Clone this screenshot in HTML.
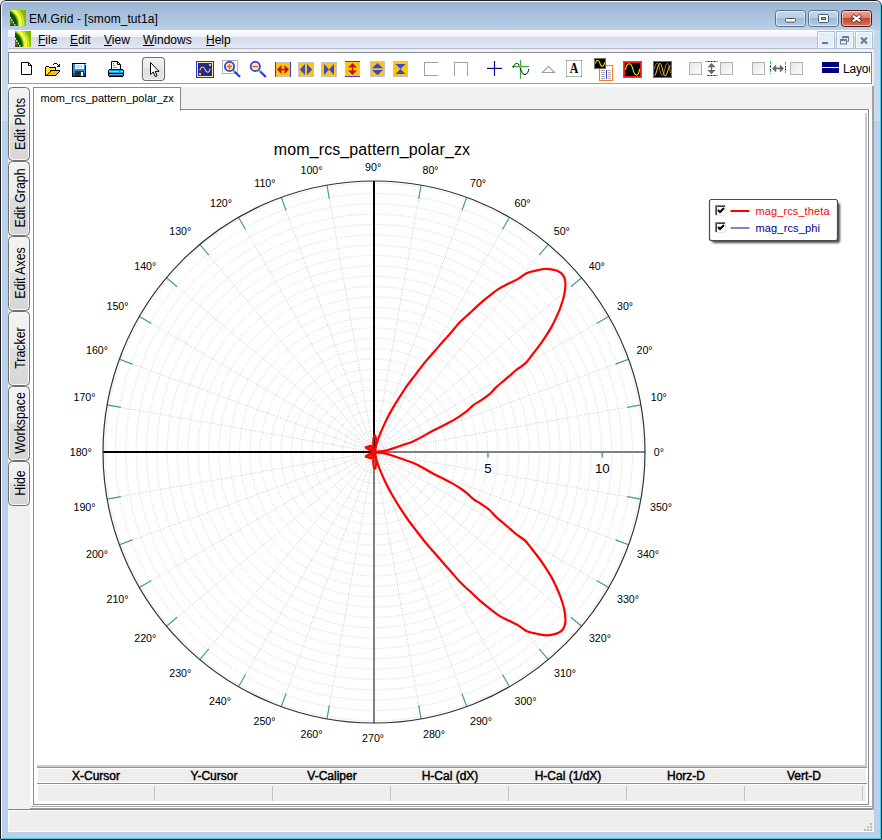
<!DOCTYPE html>
<html><head><meta charset="utf-8"><title>EM.Grid - [smom_tut1a]</title>
<style>
*{box-sizing:border-box;margin:0;padding:0}
html,body{width:882px;height:840px;overflow:hidden;background:#fff}
body{font-family:"Liberation Sans",Arial,sans-serif;font-size:12px;color:#000;position:relative}
#win{position:absolute;left:0;top:0;width:882px;height:840px;background:#b9d1ea;border-radius:6px 6px 1px 1px;overflow:hidden}
#win>*{position:absolute}
#frame{left:0;top:0;width:882px;height:840px;border:1px solid #1c1c1c;border-radius:6px 6px 1px 1px}
#inner{left:1px;top:1px;width:880px;height:838px;border:1px solid #fff;border-color:#fff #3fd4f4 #36d0ee #fff;border-radius:5px 5px 0 0}
#cap{left:2px;top:2px;width:878px;height:28px;background:linear-gradient(#99b4d1,#b9d1ea);border-radius:5px 5px 0 0}
.fl{top:30px;width:6px;height:91px;background:linear-gradient(#c3d7ee,#cbdcf1)}
#title{left:29px;top:11px;font-size:12px;line-height:16px;white-space:nowrap;letter-spacing:0.07px}
#menubar{left:8px;top:30px;width:866px;height:19px;background:linear-gradient(#ffffff 0,#eff2fa 36%,#d6dbec 37%,#e2e7f5 94%,#b6bccc 95%)}
.mi{position:absolute;top:2px;font-size:12px;line-height:16px;white-space:nowrap}
.mi u{text-decoration:underline;text-underline-offset:1px}
#client{left:8px;top:49px;width:866px;height:783px;background:#f0f0f0}
#toolbar{left:8px;top:52px;width:864px;height:32px;background:#fff;border:1px solid #828790;border-bottom-color:#9a9ea6}
#layout{left:843px;top:61px;width:27px;height:18px;overflow:hidden;font-size:12px;line-height:16px;white-space:nowrap;letter-spacing:-0.2px}
#dock{left:30px;top:84px;width:843px;height:725px;background:#fff}
#strip{left:33px;top:87px;width:839px;height:22px;background:#f0f0f0}
#tbw{left:8px;top:84px;width:22px;height:3px;background:#fff}
#rline{left:872px;top:86px;width:2px;height:724px;background:#a2a2a2}
.stab{position:absolute;left:8px;width:22px;border:1.4px solid #707070;border-radius:4.5px;background:linear-gradient(#f3f3f3 0,#ededed 49%,#dfdfdf 50%,#d6d6d6 100%);box-shadow:inset 0 0 0 1px #f8f8f8}
.stab span{position:absolute;left:calc(50% + 0.8px);top:calc(50% - 0.5px);transform:translate(-50%,-50%) rotate(-90deg) scale(1.03,1.17);white-space:nowrap;font-size:12px;letter-spacing:0px}
#tab{left:33px;top:87px;width:148px;height:24px;background:#fff;border:1px solid #898c95;border-bottom:none;font-size:11px;line-height:14px;padding:3px 0 0 6.5px;white-space:nowrap;letter-spacing:0px}
#pane{left:33px;top:109px;width:836px;height:696px;background:#fff;border:1px solid #898c95}
#panecover{left:34px;top:109px;width:146px;height:2px;background:#fff}
#rwhite{left:869px;top:87px;width:4px;height:722px;background:#fff}
#bwhite{left:31px;top:805px;width:842px;height:2px;background:#fff}
#inl{left:865px;top:113px;width:2px;height:653px;background:#cacaca}
#ctop{left:37px;top:765px;width:830px;height:3px;background:linear-gradient(#cfcfcf 0,#cbcbcb 66%,#949494 67%)}
#chead{left:38px;top:769px;width:828px;height:13px;background:#f0eded}
#cline{left:37px;top:783px;width:830px;height:1px;background:#8c8c8c}
#crow{left:38px;top:785px;width:828px;height:16px;background:#f0eded}
.ch{position:absolute;top:769px;width:118px;height:15px;text-align:center;font-size:12px;font-weight:normal;-webkit-text-stroke:0.45px #000;line-height:15px;white-space:nowrap;letter-spacing:0px}
.csep{position:absolute;top:786px;width:1px;height:15px;background:#c4c4c4}
#b1{left:31px;top:806px;width:843px;height:1px;background:#ababab}
#b2{left:30px;top:808px;width:844px;height:1px;background:#9a9a9a}
#b3{left:8px;top:809px;width:866px;height:1px;background:#868686}
#status{left:8px;top:810px;width:866px;height:22px;background:#f0eded;border:1px solid #fff;border-right:none}
svg{position:absolute;left:0;top:0}
</style></head><body>
<div id="win">
<div id="cap"></div><div class="fl" style="left:2px"></div><div class="fl" style="left:874px"></div>
<div id="title">EM.Grid - [smom_tut1a]</div>
<div id="menubar">
<span class="mi" style="left:30px"><u>F</u>ile</span>
<span class="mi" style="left:62px"><u>E</u>dit</span>
<span class="mi" style="left:96px"><u>V</u>iew</span>
<span class="mi" style="left:135px"><u>W</u>indows</span>
<span class="mi" style="left:198px"><u>H</u>elp</span>
</div>
<div id="client"></div>
<div id="toolbar"></div>
<div id="dock"></div><div id="strip"></div>
<div id="layout">Layout</div>
<div id="tbw"></div>
<div class="stab" style="top:87px;height:74px"><span>Edit Plots</span></div>
<div class="stab" style="top:161px;height:75px"><span>Edit Graph</span></div>
<div class="stab" style="top:236px;height:75px"><span>Edit Axes</span></div>
<div class="stab" style="top:311px;height:75px"><span>Tracker</span></div>
<div class="stab" style="top:386px;height:75px"><span>Workspace</span></div>
<div class="stab" style="top:461px;height:45px"><span>Hide</span></div>

<div id="pane"></div>
<div id="tab">mom_rcs_pattern_polar_zx</div>
<div id="panecover"></div>
<div id="inl"></div>
<div id="ctop"></div><div id="chead"></div><div id="cline"></div><div id="crow"></div>
<div class="ch" style="left:37px">X-Cursor</div><div class="ch" style="left:155px">Y-Cursor</div><div class="ch" style="left:273px">V-Caliper</div><div class="ch" style="left:391px">H-Cal (dX)</div><div class="ch" style="left:509px">H-Cal (1/dX)</div><div class="ch" style="left:627px">Horz-D</div><div class="ch" style="left:745px">Vert-D</div><div class="csep" style="left:154px"></div><div class="csep" style="left:272px"></div><div class="csep" style="left:390px"></div><div class="csep" style="left:508px"></div><div class="csep" style="left:626px"></div><div class="csep" style="left:744px"></div><div class="csep" style="left:862px"></div>
<div id="b1"></div><div id="b2"></div><div id="b3"></div>
<div id="status"></div>
<div id="rline"></div>
<div id="inner"></div>
<div id="frame"></div>
<svg width="882" height="840" viewBox="0 0 882 840">
<defs>
<radialGradient id="gi0" gradientUnits="userSpaceOnUse" cx="2.8" cy="24.3" r="28"><stop offset="0.321" stop-color="#5a7c00"/><stop offset="0.371" stop-color="#1c4c04"/><stop offset="0.407" stop-color="#0a4208"/><stop offset="0.493" stop-color="#0c5c10"/><stop offset="0.539" stop-color="#4ca018"/><stop offset="0.589" stop-color="#e8f828"/><stop offset="0.671" stop-color="#ffff50"/><stop offset="0.707" stop-color="#b4d010"/><stop offset="0.743" stop-color="#e0ec30"/><stop offset="0.786" stop-color="#90c000"/><stop offset="1.000" stop-color="#6aa800"/></radialGradient>
<radialGradient id="gi1" gradientUnits="userSpaceOnUse" cx="7.8" cy="45.3" r="28"><stop offset="0.321" stop-color="#5a7c00"/><stop offset="0.371" stop-color="#1c4c04"/><stop offset="0.407" stop-color="#0a4208"/><stop offset="0.493" stop-color="#0c5c10"/><stop offset="0.539" stop-color="#4ca018"/><stop offset="0.589" stop-color="#e8f828"/><stop offset="0.671" stop-color="#ffff50"/><stop offset="0.707" stop-color="#b4d010"/><stop offset="0.743" stop-color="#e0ec30"/><stop offset="0.786" stop-color="#90c000"/><stop offset="1.000" stop-color="#6aa800"/></radialGradient>
<linearGradient id="gwb" x1="0" y1="0" x2="0" y2="1"><stop offset="0" stop-color="#c8d8ea"/><stop offset="0.47" stop-color="#b8cce4"/><stop offset="0.5" stop-color="#9fb9d8"/><stop offset="1" stop-color="#b4cbe6"/></linearGradient>
<linearGradient id="gcl" x1="0" y1="0" x2="0" y2="1"><stop offset="0" stop-color="#e8a898"/><stop offset="0.47" stop-color="#d8806c"/><stop offset="0.5" stop-color="#c4482c"/><stop offset="1" stop-color="#d87858"/></linearGradient>
</defs>
<rect x="10" y="10" width="16" height="16" fill="url(#gi0)"/>
<line x1="10" y1="17" x2="15.5" y2="26" stroke="#fff" stroke-width="1.2" stroke-dasharray="1.6 1.2"/>
<rect x="10" y="24.5" width="3" height="1.5" fill="#404030"/>
<rect x="15" y="31" width="16" height="16" fill="url(#gi1)"/>
<line x1="15" y1="38" x2="20.5" y2="47" stroke="#fff" stroke-width="1.2" stroke-dasharray="1.6 1.2"/>
<rect x="15" y="45.5" width="3" height="1.5" fill="#404030"/>
<rect x="775.5" y="10.5" width="30" height="16" rx="3" fill="url(#gwb)" stroke="#5a6f8c"/>
<rect x="776.5" y="11.5" width="28" height="14" rx="2" fill="none" stroke="#fff" stroke-opacity="0.55"/>
<rect x="808.5" y="10.5" width="30" height="16" rx="3" fill="url(#gwb)" stroke="#5a6f8c"/>
<rect x="809.5" y="11.5" width="28" height="14" rx="2" fill="none" stroke="#fff" stroke-opacity="0.55"/>
<rect x="841.5" y="10.5" width="30" height="16" rx="3" fill="url(#gcl)" stroke="#4a1820"/>
<rect x="842.5" y="11.5" width="28" height="14" rx="2" fill="none" stroke="#fff" stroke-opacity="0.55"/>
<rect x="785.5" y="18.5" width="10" height="3.6" rx="1" fill="#fff" stroke="#4a5568" stroke-width="1"/>
<rect x="818.5" y="14.5" width="10" height="8" rx="1" fill="#fff" stroke="#4a5568" stroke-width="1"/>
<rect x="821.5" y="17.5" width="4" height="2" fill="#9fb9d8" stroke="#4a5568" stroke-width="1"/>
<path d="M853.6,16.3 L859.4,20.7 M859.4,16.3 L853.6,20.7" fill="none" stroke="#4a2a34" stroke-width="3.8" stroke-linecap="square" stroke-opacity="0.85"/>
<path d="M853.6,16.3 L859.4,20.7 M859.4,16.3 L853.6,20.7" fill="none" stroke="#fff" stroke-width="2.1" stroke-linecap="square"/>
<rect x="817.5" y="31.5" width="17" height="17" fill="#e2eefa" stroke="#b0c0d2"/>
<rect x="818.5" y="32.5" width="15" height="15" fill="none" stroke="#f4f9fe"/>
<rect x="836.5" y="31.5" width="17" height="17" fill="#e2eefa" stroke="#b0c0d2"/>
<rect x="837.5" y="32.5" width="15" height="15" fill="none" stroke="#f4f9fe"/>
<rect x="855.5" y="31.5" width="17" height="17" fill="#e2eefa" stroke="#b0c0d2"/>
<rect x="856.5" y="32.5" width="15" height="15" fill="none" stroke="#f4f9fe"/>
<rect x="822" y="42" width="6" height="2" fill="#6c7a8a"/>
<g fill="none" stroke="#6c7a8a" stroke-width="1"><path d="M842.5,38.5 V36.5 H848.5 V41.5 H846.5"/><path d="M842,37.5 H849" /><rect x="840.5" y="39.5" width="6" height="4.5" fill="#e2eefa"/><path d="M840,40.5 H847"/></g>
<path d="M861,37.5 L867,43.5 M867,37.5 L861,43.5" stroke="#6c7a8a" stroke-width="2"/>
<g fill="#b8b8b8" shape-rendering="crispEdges">
<rect x="870" y="823" width="2" height="2"/>
<rect x="870" y="826" width="2" height="2"/>
<rect x="870" y="829" width="2" height="2"/>
<rect x="867" y="826" width="2" height="2"/>
<rect x="867" y="829" width="2" height="2"/>
<rect x="864" y="829" width="2" height="2"/>
</g>
<g shape-rendering="crispEdges">
<path d="M21.5,62.5 H28.5 L31.5,65.5 V74.5 H21.5 Z" fill="#fff" stroke="#000" stroke-width="1" shape-rendering="geometricPrecision"/>
<path d="M28.5,62.5 V65.5 H31.5" fill="none" stroke="#000" stroke-width="1" shape-rendering="geometricPrecision"/>
<rect x="46" y="67" width="3" height="1" fill="#ffd020"/>
<rect x="46" y="68" width="9" height="2" fill="#ffd020"/>
<rect x="46" y="70" width="4" height="1" fill="#ffd020"/>
<rect x="46" y="71" width="4" height="1" fill="#ffd020"/>
<rect x="46" y="72" width="3" height="1" fill="#ffd020"/>
<rect x="46" y="73" width="2" height="1" fill="#ffd020"/>
<rect x="46" y="74" width="1" height="1" fill="#ffd020"/>
<rect x="46" y="67" width="1" height="1" fill="#fff"/>
<rect x="48" y="67" width="1" height="1" fill="#fff"/>
<rect x="47" y="68" width="1" height="1" fill="#fff"/>
<rect x="49" y="68" width="1" height="1" fill="#fff"/>
<rect x="51" y="68" width="1" height="1" fill="#fff"/>
<rect x="53" y="68" width="1" height="1" fill="#fff"/>
<rect x="46" y="69" width="1" height="1" fill="#fff"/>
<rect x="48" y="69" width="1" height="1" fill="#fff"/>
<rect x="50" y="69" width="1" height="1" fill="#fff"/>
<rect x="52" y="69" width="1" height="1" fill="#fff"/>
<rect x="54" y="69" width="1" height="1" fill="#fff"/>
<rect x="47" y="70" width="1" height="1" fill="#fff"/>
<rect x="49" y="70" width="1" height="1" fill="#fff"/>
<rect x="46" y="71" width="1" height="1" fill="#fff"/>
<rect x="48" y="71" width="1" height="1" fill="#fff"/>
<rect x="47" y="72" width="1" height="1" fill="#fff"/>
<rect x="46" y="73" width="1" height="1" fill="#fff"/>
<rect x="51" y="71" width="8" height="1" fill="#f8c000"/>
<rect x="50" y="72" width="8" height="1" fill="#f8c000"/>
<rect x="49" y="73" width="8" height="1" fill="#f8c000"/>
<rect x="48" y="74" width="8" height="1" fill="#f8c000"/>
<rect x="46" y="66" width="3" height="1" fill="#000"/>
<rect x="49" y="67" width="7" height="1" fill="#000"/>
<rect x="45" y="67" width="1" height="9" fill="#000"/>
<rect x="55" y="68" width="1" height="2" fill="#000"/>
<rect x="50" y="70" width="10" height="1" fill="#000"/>
<rect x="45" y="75" width="11" height="1" fill="#000"/>
<rect x="50" y="71" width="1" height="1" fill="#000"/>
<rect x="49" y="72" width="1" height="1" fill="#000"/>
<rect x="48" y="73" width="1" height="1" fill="#000"/>
<rect x="47" y="74" width="1" height="1" fill="#000"/>
<rect x="59" y="71" width="1" height="1" fill="#000"/>
<rect x="58" y="72" width="1" height="1" fill="#000"/>
<rect x="57" y="73" width="1" height="1" fill="#000"/>
<rect x="56" y="74" width="1" height="1" fill="#000"/>
<rect x="53" y="64" width="1" height="1" fill="#000"/>
<rect x="54" y="63" width="3" height="1" fill="#000"/>
<rect x="57" y="64" width="1" height="1" fill="#000"/>
<rect x="58" y="65" width="1" height="1" fill="#000"/>
<rect x="59" y="64" width="1" height="3" fill="#000"/>
<rect x="57" y="66" width="2" height="1" fill="#000"/>
<rect x="72" y="63" width="14" height="14" fill="#000"/>
<rect x="73" y="64" width="12" height="12" fill="#1c96e8"/>
<rect x="73" y="73" width="12" height="3" fill="#3a44c8"/>
<rect x="75" y="64" width="9" height="5" fill="#fff"/>
<rect x="76" y="65" width="6" height="3" fill="#d8d8d8"/>
<rect x="85" y="64" width="1" height="1" fill="#fff"/>
<rect x="75" y="71" width="9" height="5" fill="#2c2c2c"/>
<rect x="81" y="72" width="2" height="4" fill="#fff"/>
<path d="M111.5,69 V61.5 H117.5 L120.5,64.5 V69" fill="#fff" stroke="#000" stroke-width="1" shape-rendering="geometricPrecision"/>
<path d="M117.5,61.5 V64.5 H120.5" fill="none" stroke="#000" stroke-width="1" shape-rendering="geometricPrecision"/>
<rect x="113" y="63" width="1" height="1" fill="#777"/><rect x="113" y="65" width="2" height="1" fill="#888"/><rect x="113" y="67" width="4" height="1" fill="#999"/>
<rect x="108" y="70" width="16" height="6" fill="#000"/><rect x="109" y="69" width="14" height="8" fill="#000"/>
<rect x="109" y="70" width="14" height="3" fill="#08a8e8"/>
<rect x="109" y="71" width="14" height="1" fill="#a8e420"/>
<rect x="119" y="71" width="1" height="1" fill="#f03030"/><rect x="120" y="71" width="1" height="1" fill="#ff8a10"/><rect x="121" y="71" width="2" height="1" fill="#ffe810"/>
<rect x="109" y="74" width="14" height="1" fill="#70a0dc"/>
<rect x="109" y="75" width="14" height="1" fill="#3440c8"/>
</g>
<defs><linearGradient id="gbtn" x1="0" y1="0" x2="0" y2="1"><stop offset="0" stop-color="#f2f2f2"/><stop offset="0.5" stop-color="#e8e8e8"/><stop offset="0.5" stop-color="#dddddd"/><stop offset="1" stop-color="#e6e6e6"/></linearGradient>
<linearGradient id="gchk" x1="0" y1="0" x2="1" y2="1"><stop offset="0" stop-color="#e6e6e6"/><stop offset="1" stop-color="#fcfcfc"/></linearGradient></defs>
<rect x="142.5" y="57.5" width="22" height="23" rx="3.5" fill="url(#gbtn)" stroke="#6c6c6c" stroke-width="1.2"/>
<rect x="143.5" y="58.5" width="20" height="21" rx="2.5" fill="none" stroke="#fafafa" stroke-opacity="0.7"/>
<path d="M150.5,62.5 V74.6 L153.3,72 L155.3,76.6 L157.2,75.8 L155.2,71.4 H159 Z" fill="#fff" stroke="#000" stroke-width="1" stroke-linejoin="miter"/>
<g shape-rendering="crispEdges"><rect x="196" y="61" width="18" height="17" fill="#2434c0"/><rect x="197" y="62" width="16" height="15" fill="#fbe8b4"/><rect x="198" y="63" width="14" height="13" fill="#20289c"/>
<rect x="209" y="64" width="2" height="2" fill="#ffd020"/><rect x="199" y="73" width="2" height="2" fill="#ffd020"/></g>
<path d="M200,70.5 C200.6,66.2 203.4,65.8 205,69.5 C206.6,73.4 209.4,73.4 210,68.6" fill="none" stroke="#ffd020" stroke-width="1.1"/>
<rect x="222.5" y="60.5" width="15" height="13" fill="#fff" stroke="#b4b4b4" shape-rendering="crispEdges"/>
<line x1="233.5" y1="70.5" x2="240.0" y2="77" stroke="#2c3cc8" stroke-width="2.2"/>
<line x1="233.1" y1="70.2" x2="234.8" y2="71.9" stroke="#70d020" stroke-width="2"/>
<circle cx="229.5" cy="66.4" r="4.6" fill="#fbf0c8" stroke="#3a4cd0" stroke-width="1.9"/>
<line x1="226.8" y1="66.5" x2="232.2" y2="66.5" stroke="#ff5a10" stroke-width="1.35"/>
<line x1="229.5" y1="63.8" x2="229.5" y2="69.2" stroke="#ff5a10" stroke-width="1.35"/>
<line x1="259.3" y1="70.5" x2="265.8" y2="77" stroke="#2c3cc8" stroke-width="2.2"/>
<line x1="258.90000000000003" y1="70.2" x2="260.6" y2="71.9" stroke="#70d020" stroke-width="2"/>
<circle cx="255.3" cy="66.4" r="4.6" fill="#fbf0c8" stroke="#3a4cd0" stroke-width="1.9"/>
<line x1="252.60000000000002" y1="66.5" x2="258.0" y2="66.5" stroke="#ff5a10" stroke-width="1.35"/>
<g shape-rendering="crispEdges">
<rect x="275" y="62" width="16" height="15" fill="#c4c4c4"/><rect x="276" y="63" width="14" height="13" fill="#ffc410"/>
<rect x="298" y="62" width="16" height="15" fill="#c4c4c4"/><rect x="299" y="63" width="14" height="13" fill="#ffc410"/>
<rect x="321" y="62" width="16" height="15" fill="#c4c4c4"/><rect x="322" y="63" width="14" height="13" fill="#ffc410"/>
<rect x="275" y="62" width="1" height="15" fill="#3040d8"/><rect x="290" y="62" width="1" height="15" fill="#3040d8"/>
<rect x="345" y="61" width="15" height="16" fill="#c4c4c4"/><rect x="346" y="62" width="13" height="14" fill="#ffc410"/>
<rect x="370" y="61" width="15" height="16" fill="#c4c4c4"/><rect x="371" y="62" width="13" height="14" fill="#ffc410"/>
<rect x="393" y="61" width="15" height="16" fill="#c4c4c4"/><rect x="394" y="62" width="13" height="14" fill="#ffc410"/>
<rect x="345" y="61" width="15" height="1" fill="#3040d8"/><rect x="345" y="76" width="15" height="1" fill="#3040d8"/>
</g>
<path d="M277,69.5 L281.5,65 V68.8 H284.5 V65 L289,69.5 L284.5,74 V70.2 H281.5 V74 Z" fill="#c81414"/>
<path d="M299.8,69.5 L305,64 V75 Z M312.2,69.5 L307,64 V75 Z" fill="#3848d0"/>
<path d="M324,64 L329,69.5 L324,75 Z M334,64 L329,69.5 L334,75 Z" fill="#3848d0"/>
<path d="M352.5,63 L357,67.5 H353.2 V70.5 H357 L352.5,75 L348,70.5 H351.8 V67.5 H348 Z" fill="#c81414"/>
<path d="M377.5,63 L383,68.2 H372 Z M377.5,75.2 L383,70 H372 Z" fill="#3848d0"/>
<path d="M395.5,64 H405.5 L400.5,69 Z M395.5,74 H405.5 L400.5,69 Z" fill="#3848d0"/>
<g fill="none" stroke="#a0a0a0" stroke-width="1" shape-rendering="crispEdges"><path d="M438,62.5 H424.5 V75.5 H438"/><path d="M454.5,76 V62.5 H467.5 V76"/></g>
<g stroke="#000080" stroke-width="1.15"><line x1="494.5" y1="61" x2="494.5" y2="76"/><line x1="487" y1="68.4" x2="502" y2="68.4"/></g>
<g stroke="#28b43c" stroke-width="1.2"><line x1="520.5" y1="60" x2="520.5" y2="78.7"/><line x1="512" y1="66.5" x2="529" y2="66.5"/></g>
<path d="M513.2,67.8 C514,64 517,61.5 519,65 C521,69 522,75 525,74.6 C527.5,74.2 528.6,71 528.8,69" fill="none" stroke="#000" stroke-width="0.95"/>
<rect x="519" y="65" width="3" height="3" fill="#ff7a14" shape-rendering="crispEdges"/>
<path d="M548.5,66.4 L554.6,72.5 H542.4 Z" fill="#fff" stroke="#9c9c9c" stroke-width="1.1"/>
<rect x="566.5" y="60.5" width="15" height="16" fill="#fff" stroke="#b8b8b8" shape-rendering="crispEdges"/>
<g fill="#707070" shape-rendering="crispEdges"><rect x="566" y="60" width="1" height="1"/><rect x="581" y="60" width="1" height="1"/><rect x="566" y="76" width="1" height="1"/><rect x="581" y="76" width="1" height="1"/></g>
<text x="574" y="73" text-anchor="middle" font-family="Liberation Serif, serif" font-weight="bold" font-size="14" fill="#000" textLength="8.6" lengthAdjust="spacingAndGlyphs">A</text>
<g shape-rendering="crispEdges"><rect x="599.5" y="65.5" width="13" height="15" fill="#fff" stroke="#ff7a1e"/>
<rect x="601" y="70" width="4" height="1" fill="#b0b0b0"/><rect x="608" y="70" width="3" height="1" fill="#b0b0b0"/>
<rect x="601" y="72" width="4" height="1" fill="#b0b0b0"/><rect x="608" y="72" width="3" height="1" fill="#b0b0b0"/>
<rect x="601" y="74" width="4" height="1" fill="#b0b0b0"/><rect x="608" y="74" width="3" height="1" fill="#b0b0b0"/>
<rect x="601" y="76" width="4" height="1" fill="#b0b0b0"/><rect x="608" y="76" width="3" height="1" fill="#b0b0b0"/>
<rect x="601" y="78" width="4" height="1" fill="#b0b0b0"/><rect x="608" y="78" width="3" height="1" fill="#b0b0b0"/>
<rect x="606" y="70" width="1" height="9" fill="#3040d8"/>
<rect x="594" y="58" width="12" height="11" fill="#6e6e6e"/><rect x="595" y="59" width="10" height="9" fill="#000"/></g>
<path d="M595.5,63.5 C596.3,59.2 598.6,59.2 599.8,63 C601,67.4 603.6,67.4 604.6,62.3" fill="none" stroke="#ffd800" stroke-width="1.05"/>
<g shape-rendering="crispEdges"><rect x="623" y="61" width="19" height="17" fill="#707070"/><rect x="624" y="62" width="17" height="15" fill="#e81818"/><rect x="625" y="63" width="15" height="13" fill="#000"/></g>
<path d="M625.6,70 C626.5,62 631,61.5 633,69.5 C634.5,76.5 638.5,77.5 639.6,69" fill="none" stroke="#ffff00" stroke-width="1.05"/>
<g shape-rendering="crispEdges"><rect x="653" y="61" width="19" height="17" fill="#707070"/><rect x="654" y="62" width="17" height="15" fill="#000"/></g>
<path d="M654.5,69 C655.3,65 656,63.3 657.3,63.3 C659.5,63.3 660,75.5 662.3,75.5 C664.6,75.5 665,63.3 667.2,63.3 C669,63.3 669.8,70 670.6,73" fill="none" stroke="#909090" stroke-width="0.9"/>
<path d="M654.6,75.5 C656.5,75 657.5,63.5 660,63.5 C662.5,63.5 662.8,75.8 665.2,75.8 C667.6,75.8 668,66 670.5,65.5" fill="none" stroke="#ffc000" stroke-width="1.05"/>
<rect x="689.5" y="62.5" width="12" height="12" fill="url(#gchk)" stroke="#b2b2b2" shape-rendering="crispEdges"/>
<rect x="720.5" y="62.5" width="12" height="12" fill="url(#gchk)" stroke="#b2b2b2" shape-rendering="crispEdges"/>
<rect x="752.5" y="62.5" width="12" height="12" fill="url(#gchk)" stroke="#b2b2b2" shape-rendering="crispEdges"/>
<rect x="790.5" y="62.5" width="12" height="12" fill="url(#gchk)" stroke="#b2b2b2" shape-rendering="crispEdges"/>
<g stroke="#10f010" stroke-width="1" shape-rendering="crispEdges"><line x1="705" y1="61.5" x2="718" y2="61.5"/><line x1="707" y1="75.5" x2="718" y2="75.5"/></g>
<g fill="#111" shape-rendering="crispEdges"><rect x="708" y="61" width="1" height="1"/><rect x="711" y="61" width="1" height="1"/><rect x="714" y="61" width="1" height="1"/><rect x="708" y="75" width="1" height="1"/><rect x="711" y="75" width="1" height="1"/><rect x="714" y="75" width="1" height="1"/></g>
<path d="M711.5,63 L715.5,67.2 H712.1 V70 H715.5 L711.5,74.2 L707.5,70 H710.9 V67.2 H707.5 Z" fill="#686868"/>
<g stroke="#10f010" stroke-width="1" stroke-dasharray="3 1" shape-rendering="crispEdges"><line x1="770.5" y1="61" x2="770.5" y2="74"/><line x1="785.5" y1="62" x2="785.5" y2="74"/></g>
<g fill="#111" shape-rendering="crispEdges"><rect x="770" y="66" width="1" height="1"/><rect x="770" y="69" width="1" height="1"/><rect x="785" y="66" width="1" height="1"/><rect x="785" y="69" width="1" height="1"/></g>
<path d="M772,68.4 L776.2,64.4 V67.6 H779.8 V64.4 L784,68.4 L779.8,72.4 V69.2 H776.2 V72.4 Z" fill="#686868"/>
<g shape-rendering="crispEdges" fill="#000080"><rect x="822" y="62" width="17" height="5"/><rect x="822" y="68" width="17" height="5"/></g>
<g fill="none" stroke="#d2d2d2" stroke-width="1" stroke-dasharray="1 1.6">
<circle cx="374.0" cy="452.0" r="10.34"/>
<circle cx="374.0" cy="452.0" r="20.68"/>
<circle cx="374.0" cy="452.0" r="31.02"/>
<circle cx="374.0" cy="452.0" r="41.36"/>
<circle cx="374.0" cy="452.0" r="51.70"/>
<circle cx="374.0" cy="452.0" r="62.04"/>
<circle cx="374.0" cy="452.0" r="72.38"/>
<circle cx="374.0" cy="452.0" r="82.72"/>
<circle cx="374.0" cy="452.0" r="93.06"/>
<circle cx="374.0" cy="452.0" r="103.40"/>
<circle cx="374.0" cy="452.0" r="113.74"/>
<circle cx="374.0" cy="452.0" r="124.08"/>
<circle cx="374.0" cy="452.0" r="134.42"/>
<circle cx="374.0" cy="452.0" r="144.76"/>
<circle cx="374.0" cy="452.0" r="155.10"/>
<circle cx="374.0" cy="452.0" r="165.44"/>
<circle cx="374.0" cy="452.0" r="175.78"/>
<circle cx="374.0" cy="452.0" r="186.12"/>
<circle cx="374.0" cy="452.0" r="196.46"/>
<circle cx="374.0" cy="452.0" r="206.80"/>
<circle cx="374.0" cy="452.0" r="217.14"/>
<circle cx="374.0" cy="452.0" r="227.48"/>
<circle cx="374.0" cy="452.0" r="237.82"/>
<circle cx="374.0" cy="452.0" r="248.16"/>
<circle cx="374.0" cy="452.0" r="258.50"/>
<circle cx="374.0" cy="452.0" r="268.84"/>
</g>
<g fill="none" stroke="#cacaca" stroke-width="1" stroke-dasharray="1 1.6">
<line x1="374.0" y1="452.0" x2="640.88" y2="404.94"/>
<line x1="374.0" y1="452.0" x2="628.66" y2="359.31"/>
<line x1="374.0" y1="452.0" x2="608.69" y2="316.50"/>
<line x1="374.0" y1="452.0" x2="581.60" y2="277.80"/>
<line x1="374.0" y1="452.0" x2="548.20" y2="244.40"/>
<line x1="374.0" y1="452.0" x2="509.50" y2="217.31"/>
<line x1="374.0" y1="452.0" x2="466.69" y2="197.34"/>
<line x1="374.0" y1="452.0" x2="421.06" y2="185.12"/>
<line x1="374.0" y1="452.0" x2="326.94" y2="185.12"/>
<line x1="374.0" y1="452.0" x2="281.31" y2="197.34"/>
<line x1="374.0" y1="452.0" x2="238.50" y2="217.31"/>
<line x1="374.0" y1="452.0" x2="199.80" y2="244.40"/>
<line x1="374.0" y1="452.0" x2="166.40" y2="277.80"/>
<line x1="374.0" y1="452.0" x2="139.31" y2="316.50"/>
<line x1="374.0" y1="452.0" x2="119.34" y2="359.31"/>
<line x1="374.0" y1="452.0" x2="107.12" y2="404.94"/>
<line x1="374.0" y1="452.0" x2="107.12" y2="499.06"/>
<line x1="374.0" y1="452.0" x2="119.34" y2="544.69"/>
<line x1="374.0" y1="452.0" x2="139.31" y2="587.50"/>
<line x1="374.0" y1="452.0" x2="166.40" y2="626.20"/>
<line x1="374.0" y1="452.0" x2="199.80" y2="659.60"/>
<line x1="374.0" y1="452.0" x2="238.50" y2="686.69"/>
<line x1="374.0" y1="452.0" x2="281.31" y2="706.66"/>
<line x1="374.0" y1="452.0" x2="326.94" y2="718.88"/>
<line x1="374.0" y1="452.0" x2="421.06" y2="718.88"/>
<line x1="374.0" y1="452.0" x2="466.69" y2="706.66"/>
<line x1="374.0" y1="452.0" x2="509.50" y2="686.69"/>
<line x1="374.0" y1="452.0" x2="548.20" y2="659.60"/>
<line x1="374.0" y1="452.0" x2="581.60" y2="626.20"/>
<line x1="374.0" y1="452.0" x2="608.69" y2="587.50"/>
<line x1="374.0" y1="452.0" x2="628.66" y2="544.69"/>
<line x1="374.0" y1="452.0" x2="640.88" y2="499.06"/>
</g>
<g stroke="#409c9c" stroke-width="1.15">
<line x1="627.10" y1="407.37" x2="640.88" y2="404.94"/>
<line x1="615.50" y1="364.10" x2="628.66" y2="359.31"/>
<line x1="596.57" y1="323.50" x2="608.69" y2="316.50"/>
<line x1="570.87" y1="286.80" x2="581.60" y2="277.80"/>
<line x1="539.20" y1="255.13" x2="548.20" y2="244.40"/>
<line x1="502.50" y1="229.43" x2="509.50" y2="217.31"/>
<line x1="461.90" y1="210.50" x2="466.69" y2="197.34"/>
<line x1="418.63" y1="198.90" x2="421.06" y2="185.12"/>
<line x1="329.37" y1="198.90" x2="326.94" y2="185.12"/>
<line x1="286.10" y1="210.50" x2="281.31" y2="197.34"/>
<line x1="245.50" y1="229.43" x2="238.50" y2="217.31"/>
<line x1="208.80" y1="255.13" x2="199.80" y2="244.40"/>
<line x1="177.13" y1="286.80" x2="166.40" y2="277.80"/>
<line x1="151.43" y1="323.50" x2="139.31" y2="316.50"/>
<line x1="132.50" y1="364.10" x2="119.34" y2="359.31"/>
<line x1="120.90" y1="407.37" x2="107.12" y2="404.94"/>
<line x1="120.90" y1="496.63" x2="107.12" y2="499.06"/>
<line x1="132.50" y1="539.90" x2="119.34" y2="544.69"/>
<line x1="151.43" y1="580.50" x2="139.31" y2="587.50"/>
<line x1="177.13" y1="617.20" x2="166.40" y2="626.20"/>
<line x1="208.80" y1="648.87" x2="199.80" y2="659.60"/>
<line x1="245.50" y1="674.57" x2="238.50" y2="686.69"/>
<line x1="286.10" y1="693.50" x2="281.31" y2="706.66"/>
<line x1="329.37" y1="705.10" x2="326.94" y2="718.88"/>
<line x1="418.63" y1="705.10" x2="421.06" y2="718.88"/>
<line x1="461.90" y1="693.50" x2="466.69" y2="706.66"/>
<line x1="502.50" y1="674.57" x2="509.50" y2="686.69"/>
<line x1="539.20" y1="648.87" x2="548.20" y2="659.60"/>
<line x1="570.87" y1="617.20" x2="581.60" y2="626.20"/>
<line x1="596.57" y1="580.50" x2="608.69" y2="587.50"/>
<line x1="615.50" y1="539.90" x2="628.66" y2="544.69"/>
<line x1="627.10" y1="496.63" x2="640.88" y2="499.06"/>
</g>
<line x1="374.0" y1="452.0" x2="645.0" y2="452.0" stroke="#808080" stroke-width="2"/>
<line x1="374.0" y1="452.0" x2="374.0" y2="723.0" stroke="#808080" stroke-width="2"/>
<line x1="103.0" y1="452.0" x2="374.0" y2="452.0" stroke="#000" stroke-width="2"/>
<line x1="374.0" y1="181.0" x2="374.0" y2="452.0" stroke="#000" stroke-width="2"/>
<g stroke="#4aa0a0" stroke-width="1.5">
<line x1="488" y1="453" x2="488" y2="457.5"/>
<line x1="602.3" y1="453" x2="602.3" y2="457.5"/>
</g>
<circle cx="374.0" cy="452.0" r="271.0" fill="none" stroke="#333" stroke-width="1.2"/>
<g font-family="Liberation Sans, Arial, sans-serif" font-size="10.67" fill="#000">
<text x="653.75" y="456.10">0°</text>
<text x="650.75" y="401.25">10°</text>
<text x="636.5" y="354.00">20°</text>
<text x="617.0" y="310.25">30°</text>
<text x="588.75" y="270.00">40°</text>
<text x="553.75" y="235.00">50°</text>
<text x="514.5" y="207.40">60°</text>
<text x="470.0" y="187.40">70°</text>
<text x="422.5" y="174.25">80°</text>
<text x="423.0" y="738.20">280°</text>
<text x="470.0" y="725.20">290°</text>
<text x="514.5" y="705.00">300°</text>
<text x="554.0" y="677.20">310°</text>
<text x="588.9" y="642.20">320°</text>
<text x="617.0" y="602.60">330°</text>
<text x="637.0" y="558.20">340°</text>
<text x="650.0" y="511.10">350°</text>
<text x="322.5" y="174.25" text-anchor="end">100°</text>
<text x="275.5" y="187.40" text-anchor="end">110°</text>
<text x="232.0" y="207.40" text-anchor="end">120°</text>
<text x="191.25" y="235.00" text-anchor="end">130°</text>
<text x="156.25" y="270.00" text-anchor="end">140°</text>
<text x="128.5" y="310.20" text-anchor="end">150°</text>
<text x="108.0" y="354.25" text-anchor="end">160°</text>
<text x="95.5" y="401.25" text-anchor="end">170°</text>
<text x="91.75" y="456.25" text-anchor="end">180°</text>
<text x="95.5" y="511.00" text-anchor="end">190°</text>
<text x="108.0" y="558.40" text-anchor="end">200°</text>
<text x="128.5" y="603.00" text-anchor="end">210°</text>
<text x="156.25" y="642.40" text-anchor="end">220°</text>
<text x="191.25" y="677.40" text-anchor="end">230°</text>
<text x="231.0" y="705.25" text-anchor="end">240°</text>
<text x="275.5" y="725.25" text-anchor="end">250°</text>
<text x="322.5" y="738.25" text-anchor="end">260°</text>
<text x="373.1" y="170.5" text-anchor="middle">90°</text>
<text x="373.1" y="742" text-anchor="middle">270°</text>
</g>
<g font-family="Liberation Sans, Arial, sans-serif" font-size="13.33" fill="#000" text-anchor="middle">
<text x="488" y="473">5</text><text x="602.3" y="473">10</text></g>
<text x="372" y="155" text-anchor="middle" font-family="Liberation Sans, Arial, sans-serif" font-size="16" fill="#000" letter-spacing="0.1">mom_rcs_pattern_polar_zx</text>
<path d="M374.0,452.0C374.4,450.7 375.4,447.2 376.4,444.3C377.4,441.4 378.4,438.1 380.0,434.3C381.6,430.5 383.6,425.8 385.7,421.4C387.8,417.0 390.5,412.1 392.9,407.9C395.3,403.7 397.6,400.1 400.0,396.4C402.4,392.7 404.5,389.4 407.1,385.7C409.7,382.0 412.6,378.4 415.7,374.3C418.8,370.2 422.4,365.4 425.7,361.4C429.0,357.3 432.6,353.6 435.7,350.0C438.8,346.4 441.9,342.7 444.3,340.0C446.7,337.3 447.4,336.7 450.0,333.8C452.6,330.8 456.7,325.6 460.0,322.1C463.3,318.6 466.7,316.0 470.0,312.9C473.3,309.8 476.7,306.5 480.0,303.6C483.3,300.7 486.9,297.8 490.0,295.4C493.1,292.9 495.5,290.9 498.6,288.9C501.7,286.9 505.3,285.3 508.6,283.6C511.9,281.9 515.5,280.4 518.6,278.6C521.7,276.8 524.2,274.2 527.1,272.9C530.0,271.6 532.8,271.3 535.7,270.7C538.6,270.1 541.7,269.2 544.3,269.0C546.9,268.8 549.0,268.9 551.4,269.3C553.8,269.7 556.7,270.4 558.6,271.4C560.5,272.3 561.8,273.6 562.9,275.0C564.0,276.4 564.6,278.2 565.0,280.0C565.4,281.8 565.5,283.6 565.4,285.7C565.3,287.8 565.0,290.5 564.6,292.9C564.2,295.3 563.7,297.4 562.9,300.0C562.1,302.6 561.1,305.6 560.0,308.6C558.9,311.6 557.4,314.8 556.0,317.9C554.6,321.0 553.1,324.0 551.4,327.1C549.7,330.2 547.7,333.3 545.7,336.4C543.7,339.5 541.6,342.6 539.3,345.7C537.0,348.8 534.5,352.0 532.1,355.0C529.7,358.0 527.6,361.1 525.0,363.6C522.4,366.1 518.6,368.1 516.2,370.0C513.8,371.9 512.6,373.3 510.5,375.1C508.4,376.9 506.1,378.7 503.7,380.8C501.2,382.9 498.2,385.3 495.8,387.6C493.4,389.9 491.5,392.6 489.0,394.7C486.5,396.8 483.6,398.7 481.0,400.4C478.4,402.1 476.0,403.1 473.7,404.8C471.4,406.5 469.6,408.8 467.4,410.6C465.2,412.4 463.1,414.0 460.6,415.7C458.2,417.4 455.4,419.1 452.7,420.6C450.0,422.1 447.6,423.2 444.3,424.9C441.0,426.6 436.5,428.8 432.9,430.7C429.3,432.6 426.2,434.6 422.9,436.4C419.6,438.2 416.2,440.0 412.9,441.4C409.6,442.8 406.0,443.9 402.9,445.0C399.8,446.1 396.9,447.0 394.3,447.9C391.7,448.8 389.2,449.7 387.1,450.3C385.0,450.9 383.6,451.1 381.4,451.4C379.2,451.7 375.2,451.9 374.0,452.0" fill="none" stroke="#ff0000" stroke-width="2.2" stroke-linejoin="round"/>
<path d="M374.0,452.2C374.4,453.5 375.4,457.0 376.4,459.9C377.4,462.9 378.4,466.1 380.0,469.9C381.6,473.7 383.6,478.4 385.7,482.8C387.8,487.2 390.5,492.1 392.9,496.3C395.3,500.5 397.6,504.1 400.0,507.8C402.4,511.5 404.5,514.8 407.1,518.5C409.7,522.2 412.6,525.9 415.7,529.9C418.8,534.0 422.4,538.8 425.7,542.8C429.0,546.9 432.6,550.6 435.7,554.2C438.8,557.8 441.9,561.5 444.3,564.2C446.7,566.9 447.4,567.5 450.0,570.5C452.6,573.4 456.7,578.6 460.0,582.1C463.3,585.6 466.7,588.2 470.0,591.3C473.3,594.4 476.7,597.7 480.0,600.6C483.3,603.5 486.9,606.4 490.0,608.8C493.1,611.3 495.5,613.3 498.6,615.3C501.7,617.3 505.3,618.9 508.6,620.6C511.9,622.3 515.5,623.8 518.6,625.6C521.7,627.4 524.2,630.0 527.1,631.3C530.0,632.6 532.8,632.9 535.7,633.5C538.6,634.1 541.7,635.0 544.3,635.2C546.9,635.4 549.0,635.3 551.4,634.9C553.8,634.5 556.7,633.8 558.6,632.8C560.5,631.9 561.8,630.6 562.9,629.2C564.0,627.8 564.6,626.0 565.0,624.2C565.4,622.4 565.5,620.6 565.4,618.5C565.3,616.4 565.0,613.7 564.6,611.3C564.2,608.9 563.7,606.8 562.9,604.2C562.1,601.6 561.1,598.6 560.0,595.6C558.9,592.6 557.4,589.4 556.0,586.3C554.6,583.2 553.1,580.2 551.4,577.1C549.7,574.0 547.7,570.9 545.7,567.8C543.7,564.7 541.6,561.6 539.3,558.5C537.0,555.4 534.5,552.2 532.1,549.2C529.7,546.2 527.6,543.1 525.0,540.6C522.4,538.1 518.6,536.1 516.2,534.2C513.8,532.3 512.6,530.9 510.5,529.1C508.4,527.3 506.1,525.5 503.7,523.4C501.2,521.3 498.2,518.9 495.8,516.6C493.4,514.3 491.5,511.6 489.0,509.5C486.5,507.4 483.6,505.5 481.0,503.8C478.4,502.1 476.0,501.1 473.7,499.4C471.4,497.7 469.6,495.4 467.4,493.6C465.2,491.8 463.1,490.2 460.6,488.5C458.2,486.8 455.4,485.1 452.7,483.6C450.0,482.1 447.6,481.0 444.3,479.3C441.0,477.6 436.5,475.4 432.9,473.5C429.3,471.6 426.2,469.6 422.9,467.8C419.6,466.0 416.2,464.2 412.9,462.8C409.6,461.4 406.0,460.3 402.9,459.2C399.8,458.1 396.9,457.2 394.3,456.3C391.7,455.4 389.2,454.5 387.1,453.9C385.0,453.3 383.6,453.1 381.4,452.8C379.2,452.5 375.2,452.3 374.0,452.2" fill="none" stroke="#ff0000" stroke-width="2.2" stroke-linejoin="round"/>
<g fill="none" stroke="#ff0000" stroke-width="2" stroke-linecap="round" stroke-linejoin="round">
<path d="M374,452 C372.5,446 373,436 374.8,435 C376.6,436 376.5,446 375,452"/>
<path d="M374,452 C372.5,458 373,468 374.8,469 C376.6,468 376.5,458 375,452"/>
<path d="M374,452 L366,447.5 L371,446 L374,452 L366,456.5 L371,458 L374,452 L384,452" stroke-width="2.6"/>
</g>
<defs><filter id="sh" x="-10%" y="-20%" width="125%" height="150%"><feGaussianBlur stdDeviation="0.9"/></filter></defs>
<rect x="712" y="203" width="128" height="40" rx="2" fill="#4a4a4a" filter="url(#sh)"/>
<rect x="709.5" y="199.5" width="128" height="41" rx="2" fill="#fff" stroke="#4c4c4c" stroke-width="1.2"/>
<rect x="715" y="205" width="11" height="11" fill="#fff"/>
<path d="M715.5,216 V205.5 H726" fill="none" stroke="#808080"/>
<path d="M716.5,215 V206.5 H725" fill="none" stroke="#404040"/>
<path d="M725.5,205 V215.5 H715" fill="none" stroke="#e8e8e8"/>
<path d="M718,210 l2,2 l4,-4" fill="none" stroke="#000" stroke-width="2"/>
<rect x="715" y="222" width="11" height="11" fill="#fff"/>
<path d="M715.5,233 V222.5 H726" fill="none" stroke="#808080"/>
<path d="M716.5,232 V223.5 H725" fill="none" stroke="#404040"/>
<path d="M725.5,222 V232.5 H715" fill="none" stroke="#e8e8e8"/>
<path d="M718,227 l2,2 l4,-4" fill="none" stroke="#000" stroke-width="2"/>
<line x1="730.5" y1="211" x2="749.5" y2="211" stroke="#ff0000" stroke-width="2"/>
<line x1="730.5" y1="228" x2="749.5" y2="228" stroke="#6a6ab8" stroke-width="1.6"/>
<text x="755.5" y="214.7" font-family="Liberation Sans, Arial, sans-serif" font-size="11" fill="#ff0000" textLength="74" lengthAdjust="spacing">mag_rcs_theta</text>
<text x="755.5" y="231.7" font-family="Liberation Sans, Arial, sans-serif" font-size="11" fill="#00008b" textLength="64.5" lengthAdjust="spacing">mag_rcs_phi</text>
</svg>
</div>
</body></html>
